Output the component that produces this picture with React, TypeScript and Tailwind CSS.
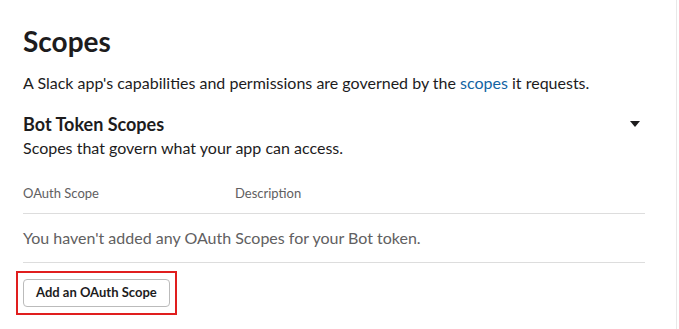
export default function App() {
  return (
    <div className="flex h-[329px] w-[679px] bg-white" style={{ fontFamily: "Lato, 'Open Sans', sans-serif" }}>
      <div className="w-[676px] pl-[23px] pr-[31px] pt-[23px]">
        <h1 className="text-[28px] font-bold leading-[36px] text-[#1d1c1d]">Scopes</h1>
        <p className="mt-[12px] text-[16px] leading-[24px] text-[#1d1c1d]">
          A Slack app's capabilities and permissions are governed by the{" "}
          <a className="text-[#1264a3]">scopes</a> it requests.
        </p>

        {/* Bot token section */}
        <div className="mt-[16px] flex items-center justify-between">
          <h2 className="text-[18px] font-bold leading-[26px] text-[#1d1c1d]">Bot Token Scopes</h2>
          <svg width="10" height="6" viewBox="0 0 10 6" className="mr-[5px]">
            <polygon points="0,0 10,0 5,6" fill="#1d1c1d" />
          </svg>
        </div>
        <p className="text-[16px] leading-[22px] text-[#1d1c1d]">Scopes that govern what your app can access.</p>

        <div className="mt-[25px] flex border-b border-[#dddddd] pb-[11px] text-[13px] leading-[18px] text-[#616061]">
          <div className="w-[212px]">OAuth Scope</div>
          <div>Description</div>
        </div>
        <div className="border-b border-[#dddddd] py-[15px] text-[16px] leading-[18px] text-[#616061]">
          You haven't added any OAuth Scopes for your Bot token.
        </div>

        <div className="-ml-[7px] mt-[8px] inline-block border-2 border-[#e01e1e] px-[5px] py-[6px]">
          <button className="h-[28px] rounded-[4px] border border-[#bbbbbb] bg-white px-[12px] text-[13px] font-bold text-[#1d1c1d]">
            Add an OAuth Scope
          </button>
        </div>
      </div>
      <div className="w-[1px] bg-[#e8e8e8]" />
    </div>
  );
}
